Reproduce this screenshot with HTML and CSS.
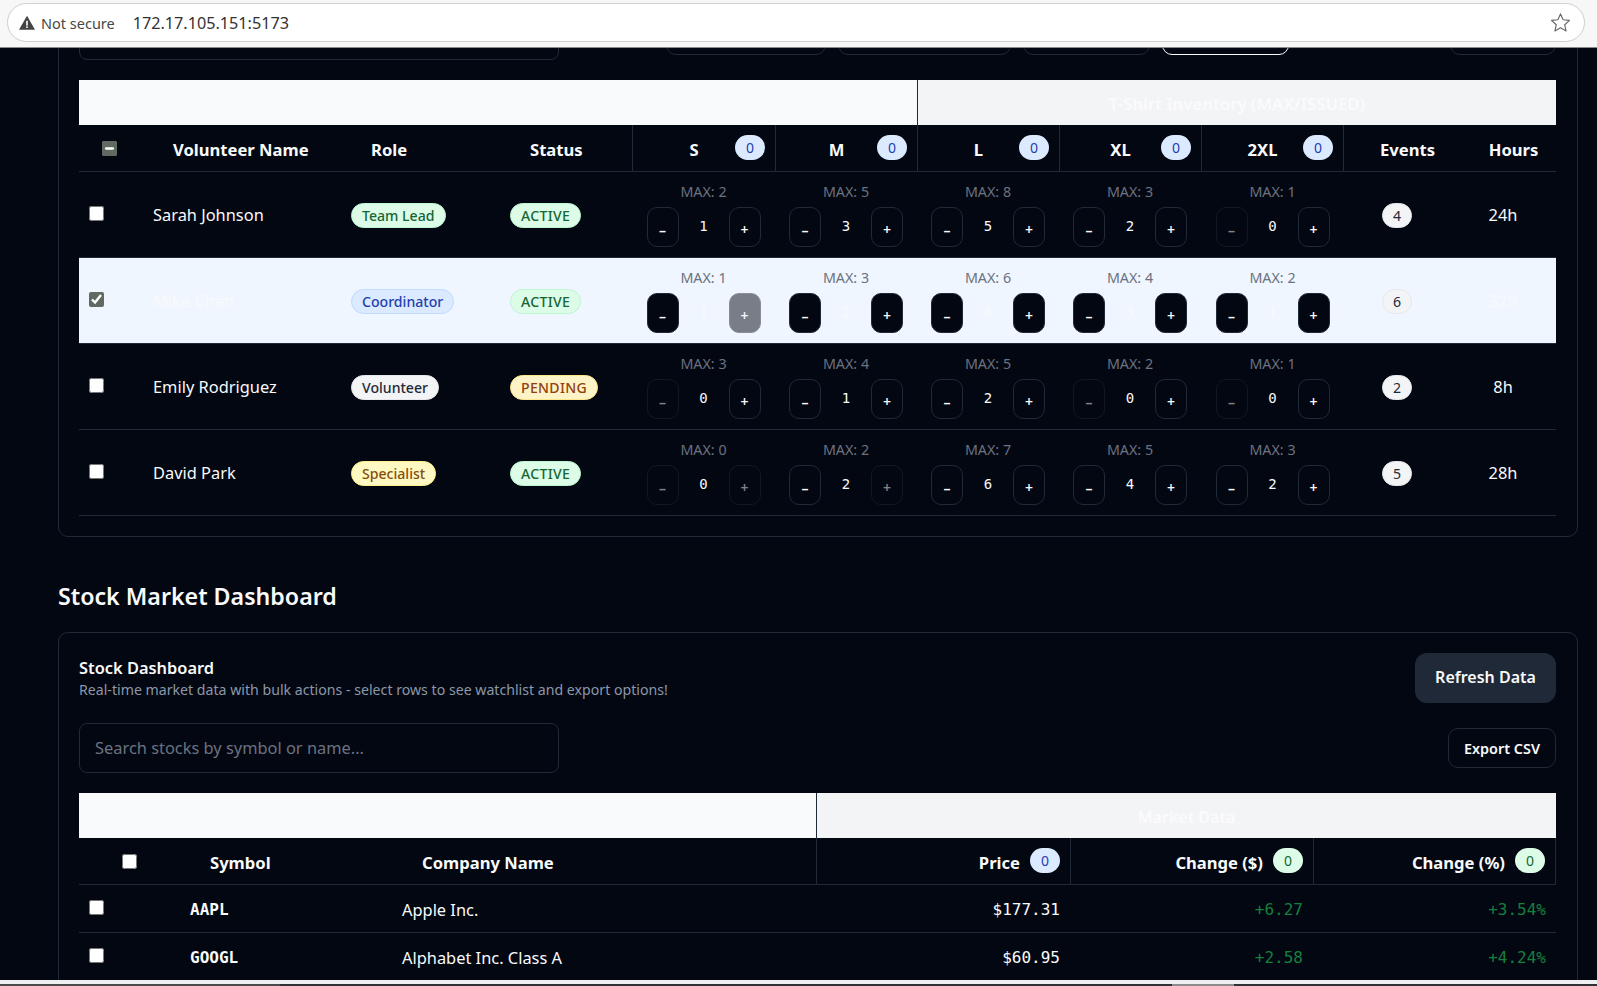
FILE: index.html
```html
<!DOCTYPE html>
<html lang="en">

<head>
    <meta charset="UTF-8">
    <meta name="viewport" content="width=device-width, initial-scale=1.0">
    <title>Volunteer and Stock Tables</title>
    <link rel="stylesheet" href="styles.css">
</head>

<body>
    <header class="browser-bar">
        <div class="address-pill">
            <svg class="warn-icon" viewBox="0 0 16 16" width="16" height="16">
                <path d="M8 .8 16 14.8H0Z" fill="#444"/>
                <rect x="7.2" y="5.8" width="1.6" height="4.8" fill="#fff"/>
                <rect x="7.2" y="11.4" width="1.6" height="1.6" fill="#fff"/>
            </svg>
            <span class="not-secure">Not secure</span>
            <span class="url">172.17.105.151:5173</span>
            <svg class="star-icon" viewBox="0 0 20 20" width="21" height="21">
                <path d="M10 1.8 12.5 7.4 18.6 8 14 12.1 15.3 18.1 10 15 4.7 18.1 6 12.1 1.4 8 7.5 7.4Z" fill="none" stroke="#666" stroke-width="1.1" stroke-linejoin="round"/>
            </svg>
        </div>
    </header>

    <main class="page">
        <section class="card card-scrolled">
            <div class="toolbar">
                <div class="search-box"></div>
                <div class="filter-buttons">
                    <button class="btn-outline filter-a" type="button"></button>
                    <button class="btn-outline filter-b" type="button"></button>
                    <button class="btn-outline filter-c" type="button"></button>
                    <button class="btn-outline filter-c filter-on" type="button"></button>
                </div>
                <button class="btn-outline filter-e" type="button"></button>
            </div>

            <table class="data-table">
                <colgroup>
                    <col class="w-64"><col class="w-198"><col class="w-159"><col class="w-132">
                    <col class="w-143"><col class="w-142"><col class="w-142"><col class="w-142"><col class="w-143">
                    <col class="w-106"><col class="w-106">
                </colgroup>
                <thead>
                    <tr class="group-row">
                        <th colspan="6" class="group-left"></th>
                        <th colspan="5" class="group-right group-long">T-Shirt Inventory (MAX/ISSUED)</th>
                    </tr>
                    <tr class="head-row">
                        <th class="check-head check-tight"><input type="checkbox" id="selectAll"></th>
                        <th class="head-left">Volunteer Name</th>
                        <th class="head-left">Role</th>
                        <th class="head-left">Status</th>
                        <th class="line-left"><div class="size-head"><span>S</span><b class="count blue">0</b></div></th>
                        <th class="line-left"><div class="size-head"><span>M</span><b class="count blue">0</b></div></th>
                        <th class="line-left"><div class="size-head"><span>L</span><b class="count blue">0</b></div></th>
                        <th class="line-left"><div class="size-head"><span>XL</span><b class="count blue">0</b></div></th>
                        <th class="line-left line-right"><div class="size-head"><span>2XL</span><b class="count blue">0</b></div></th>
                        <th class="head-shift">Events</th>
                        <th class="head-shift">Hours</th>
                    </tr>
                </thead>
                <tbody>
                    <tr>
                        <td class="check-cell"><input type="checkbox"></td>
                        <td>Sarah Johnson</td>
                        <td><span class="pill green">Team Lead</span></td>
                        <td><span class="pill green caps">ACTIVE</span></td>
                        <td><div class="max-label">MAX: 2</div><div class="stepper"><button type="button">–</button><span>1</span><button type="button">+</button></div></td>
                        <td><div class="max-label">MAX: 5</div><div class="stepper"><button type="button">–</button><span>3</span><button type="button">+</button></div></td>
                        <td><div class="max-label">MAX: 8</div><div class="stepper"><button type="button">–</button><span>5</span><button type="button">+</button></div></td>
                        <td><div class="max-label">MAX: 3</div><div class="stepper"><button type="button">–</button><span>2</span><button type="button">+</button></div></td>
                        <td><div class="max-label">MAX: 1</div><div class="stepper"><button type="button" disabled>–</button><span>0</span><button type="button">+</button></div></td>
                        <td class="center"><span class="pill round gray">4</span></td>
                        <td class="center">24h</td>
                    </tr>
                    <tr class="selected">
                        <td class="check-cell"><input type="checkbox" checked></td>
                        <td>Mike Chen</td>
                        <td><span class="pill blue">Coordinator</span></td>
                        <td><span class="pill green caps">ACTIVE</span></td>
                        <td><div class="max-label">MAX: 1</div><div class="stepper"><button type="button">–</button><span>1</span><button type="button" disabled>+</button></div></td>
                        <td><div class="max-label">MAX: 3</div><div class="stepper"><button type="button">–</button><span>2</span><button type="button">+</button></div></td>
                        <td><div class="max-label">MAX: 6</div><div class="stepper"><button type="button">–</button><span>4</span><button type="button">+</button></div></td>
                        <td><div class="max-label">MAX: 4</div><div class="stepper"><button type="button">–</button><span>3</span><button type="button">+</button></div></td>
                        <td><div class="max-label">MAX: 2</div><div class="stepper"><button type="button">–</button><span>1</span><button type="button">+</button></div></td>
                        <td class="center"><span class="pill round gray">6</span></td>
                        <td class="center">32h</td>
                    </tr>
                    <tr>
                        <td class="check-cell"><input type="checkbox"></td>
                        <td>Emily Rodriguez</td>
                        <td><span class="pill gray">Volunteer</span></td>
                        <td><span class="pill amber caps">PENDING</span></td>
                        <td><div class="max-label">MAX: 3</div><div class="stepper"><button type="button" disabled>–</button><span>0</span><button type="button">+</button></div></td>
                        <td><div class="max-label">MAX: 4</div><div class="stepper"><button type="button">–</button><span>1</span><button type="button">+</button></div></td>
                        <td><div class="max-label">MAX: 5</div><div class="stepper"><button type="button">–</button><span>2</span><button type="button">+</button></div></td>
                        <td><div class="max-label">MAX: 2</div><div class="stepper"><button type="button" disabled>–</button><span>0</span><button type="button">+</button></div></td>
                        <td><div class="max-label">MAX: 1</div><div class="stepper"><button type="button" disabled>–</button><span>0</span><button type="button">+</button></div></td>
                        <td class="center"><span class="pill round gray">2</span></td>
                        <td class="center">8h</td>
                    </tr>
                    <tr>
                        <td class="check-cell"><input type="checkbox"></td>
                        <td>David Park</td>
                        <td><span class="pill yellow">Specialist</span></td>
                        <td><span class="pill green caps">ACTIVE</span></td>
                        <td><div class="max-label">MAX: 0</div><div class="stepper"><button type="button" disabled>–</button><span>0</span><button type="button" disabled>+</button></div></td>
                        <td><div class="max-label">MAX: 2</div><div class="stepper"><button type="button">–</button><span>2</span><button type="button" disabled>+</button></div></td>
                        <td><div class="max-label">MAX: 7</div><div class="stepper"><button type="button">–</button><span>6</span><button type="button">+</button></div></td>
                        <td><div class="max-label">MAX: 5</div><div class="stepper"><button type="button">–</button><span>4</span><button type="button">+</button></div></td>
                        <td><div class="max-label">MAX: 3</div><div class="stepper"><button type="button">–</button><span>2</span><button type="button">+</button></div></td>
                        <td class="center"><span class="pill round gray">5</span></td>
                        <td class="center">28h</td>
                    </tr>
                </tbody>
            </table>
        </section>

        <h2 class="section-title">Stock Market Dashboard</h2>

        <section class="card">
            <div class="card-head">
                <div>
                    <h3>Stock Dashboard</h3>
                    <p>Real-time market data with bulk actions - select rows to see watchlist and export options!</p>
                </div>
                <button class="btn-solid" type="button">Refresh Data</button>
            </div>

            <div class="toolbar">
                <input class="search-box" type="text" placeholder="Search stocks by symbol or name...">
                <button class="btn-outline" type="button">Export CSV</button>
            </div>

            <table class="data-table">
                <colgroup>
                    <col class="w-101"><col class="w-212"><col class="w-424">
                    <col class="w-254"><col class="w-243"><col class="w-243">
                </colgroup>
                <thead>
                    <tr class="group-row">
                        <th colspan="3" class="group-left"></th>
                        <th colspan="3" class="group-right">Market Data</th>
                    </tr>
                    <tr class="head-row">
                        <th class="check-head"><input type="checkbox"></th>
                        <th class="head-left">Symbol</th>
                        <th class="head-left">Company Name</th>
                        <th class="line-left"><div class="num-head">Price<b class="count blue">0</b></div></th>
                        <th class="line-left"><div class="num-head">Change ($)<b class="count green">0</b></div></th>
                        <th class="line-left line-right"><div class="num-head">Change (%)<b class="count green">0</b></div></th>
                    </tr>
                </thead>
                <tbody class="stock-body">
                    <tr>
                        <td class="check-cell"><input type="checkbox"></td>
                        <td class="symbol">AAPL</td>
                        <td>Apple Inc.</td>
                        <td class="num">$177.31</td>
                        <td class="num up">+6.27</td>
                        <td class="num up">+3.54%</td>
                    </tr>
                    <tr>
                        <td class="check-cell"><input type="checkbox"></td>
                        <td class="symbol">GOOGL</td>
                        <td>Alphabet Inc. Class A</td>
                        <td class="num">$60.95</td>
                        <td class="num up">+2.58</td>
                        <td class="num up">+4.24%</td>
                    </tr>
                </tbody>
            </table>
        </section>
    </main>

    <footer class="window-edge">
        <div class="edge-a"></div>
        <div class="edge-b"></div>
        <div class="edge-c"></div>
        <div class="edge-b edge-fill"></div>
    </footer>

    <script>
        // header checkbox shows the partly selected state
        document.getElementById('selectAll').indeterminate = true;
    </script>
</body>

</html>
```

FILE: styles.css
```css
body {
    font-family: 'Noto Sans', sans-serif;
    font-size: 16.4px;
    margin: 0;
    height: 100vh;
    overflow: hidden;
    display: flex;
    flex-direction: column;
    background-color: #030712;
    color: #f9fafb;
}

/* browser address bar */
.browser-bar {
    flex: none;
    height: 48px;
    box-sizing: border-box;
    padding: 3px 12px 0 7px;
    background-color: #f7f7f7;
    border-bottom: 1px solid #8a8a8a;
    position: relative;
    z-index: 2;
}

.address-pill {
    height: 39px;
    box-sizing: border-box;
    display: flex;
    align-items: center;
    padding-left: 11px;
    background-color: #fff;
    border: 1px solid #cfcfcf;
    border-radius: 20px;
}

.warn-icon {
    flex: none;
}

.not-secure {
    margin-left: 6px;
    font-size: 14.5px;
    color: #474747;
}

.url {
    margin-left: 18px;
    font-size: 16.2px;
    color: #333;
}

.star-icon {
    margin-left: auto;
    margin-right: 13px;
}

/* page */
.page {
    flex: 1;
    min-height: 0;
    overflow: hidden;
    padding: 0 19px 0 58px;
}

.card {
    border: 1px solid #1f2937;
    border-radius: 10px;
    padding: 20px 21px 20px 20px;
}

.card-scrolled {
    margin-top: -59px;
}

.section-title {
    margin: 43px 0 20px;
    font-size: 23.2px;
    line-height: 32px;
    font-weight: 600;
}

.card-head {
    display: flex;
    justify-content: space-between;
    align-items: center;
    margin-bottom: 20px;
}

.card-head h3 {
    margin: 0;
    font-size: 16.4px;
    line-height: 24px;
    font-weight: 600;
}

.card-head p {
    margin: 0;
    font-size: 14.15px;
    line-height: 20px;
    color: #8b98a9;
}

.toolbar {
    display: flex;
    align-items: center;
    justify-content: space-between;
    margin-bottom: 20px;
}

.search-box {
    width: 480px;
    height: 50px;
    box-sizing: border-box;
    padding: 0 15px 2px;
    font-family: inherit;
    font-size: 16.4px;
    color: #f9fafb;
    background-color: transparent;
    border: 1px solid #1f2937;
    border-radius: 8px;
}

.search-box::placeholder {
    color: #6b7280;
}

.filter-buttons {
    display: flex;
    gap: 12px;
    margin-left: 107px;
    margin-right: auto;
}

button {
    font-family: inherit;
}

.btn-outline {
    height: 40px;
    padding: 0 15px;
    font-size: 14.4px;
    font-weight: 600;
    color: #f9fafb;
    background-color: transparent;
    border: 1px solid #1f2937;
    border-radius: 10px;
}

.filter-a { width: 160px; }
.filter-b { width: 173px; }
.filter-c { width: 127px; }
.filter-e { width: 106px; }

.filter-on {
    border-color: #f9fafb;
}

.btn-solid {
    width: 141px;
    height: 50px;
    padding: 0 0 2px;
    font-size: 16px;
    font-weight: 600;
    color: #f9fafb;
    background-color: #1f2937;
    border: none;
    border-radius: 12px;
}

/* tables */
.data-table {
    width: 100%;
    table-layout: fixed;
    border-collapse: separate;
    border-spacing: 0;
}

.w-64 { width: 64px; }
.w-101 { width: 101px; }
.w-106 { width: 106px; }
.w-132 { width: 132px; }
.w-142 { width: 142px; }
.w-143 { width: 143px; }
.w-159 { width: 159px; }
.w-198 { width: 198px; }
.w-212 { width: 212px; }
.w-243 { width: 243px; }
.w-254 { width: 254px; }
.w-424 { width: 424px; }

.data-table th,
.data-table td {
    box-sizing: border-box;
    padding: 0;
}

.group-row th {
    height: 45px;
    padding-top: 2px;
    font-size: 16px;
    font-weight: 600;
    color: #fbfbfc;
    text-align: center;
}

.data-table .group-long {
    font-size: 16.8px;
}

.group-left {
    background-color: #f9fafb;
}

.group-right {
    background-color: #f3f4f6;
    border-left: 1px solid #1f2937;
}

.head-row th {
    height: 47px;
    padding-top: 2px;
    font-size: 16.6px;
    font-weight: 700;
    border-bottom: 1px solid #1f2937;
}

.head-row .head-left {
    text-align: left;
    padding-left: 30px;
}

.head-row .head-shift {
    text-align: center;
    padding-left: 21px;
}

.line-left {
    border-left: 1px solid #1f2937;
}

.line-right {
    border-right: 1px solid #1f2937;
}

.size-head {
    display: flex;
    align-items: center;
    padding: 0 10px 0 30px;
}

.size-head span {
    flex: 1;
    text-align: center;
    padding-right: 10px;
}

.num-head {
    display: flex;
    align-items: center;
    justify-content: flex-end;
    gap: 10px;
    padding-right: 10px;
}

.count {
    flex: none;
    width: 30px;
    height: 25px;
    margin-top: -4px;
    font-size: 14px;
    font-weight: 400;
    line-height: 25px;
    text-align: center;
    border-radius: 13px;
}

.count.blue {
    background-color: #dbeafe;
    color: #1e40af;
}

.count.green {
    background-color: #dcfce7;
    color: #166534;
}

.data-table td {
    padding: 10px;
    vertical-align: middle;
    border-bottom: 1px solid #1f2937;
}

input[type="checkbox"] {
    display: block;
    width: 15px;
    height: 15px;
    margin: 0;
    accent-color: #5f6b60;
}

.check-head input {
    margin: 0 auto 2px;
}

.head-row .check-tight {
    padding-right: 3px;
}

.data-table .check-cell input {
    margin-bottom: 2px;
}

.selected td {
    background-color: #eff6ff;
}

.center {
    text-align: center;
}

.pill {
    display: inline-block;
    box-sizing: border-box;
    height: 25px;
    margin-top: 1px;
    padding: 1px 10px 0;
    font-size: 14.1px;
    font-weight: 500;
    line-height: 22px;
    vertical-align: middle;
    border: 1px solid transparent;
    border-radius: 13px;
}

.pill.caps {
    letter-spacing: 0.3px;
}

.pill.green {
    background-color: #dcfce7;
    border-color: #bbf7d0;
    color: #166534;
}

.pill.blue {
    background-color: #dbeafe;
    border-color: #bfdbfe;
    color: #1e40af;
}

.pill.gray {
    background-color: #f3f4f6;
    border-color: #e5e7eb;
    color: #1f2937;
}

.pill.yellow {
    background-color: #fef9c3;
    border-color: #fef08a;
    color: #854d0e;
}

.pill.amber {
    background-color: #fef3c7;
    border-color: #fde68a;
    color: #92400e;
}

.pill.round {
    width: 30px;
    padding: 1px 0 0;
    font-weight: 400;
    text-align: center;
}

.max-label {
    height: 20px;
    margin-bottom: 5px;
    font-size: 14.3px;
    line-height: 20px;
    color: #6b7280;
    text-align: center;
}

.stepper {
    display: flex;
    align-items: center;
    justify-content: space-between;
    width: 114px;
    margin: 0 auto;
}

.stepper span {
    margin-top: -2px;
    font-family: 'DejaVu Sans Mono', monospace;
    font-size: 14px;
}

.stepper button {
    width: 32px;
    height: 40px;
    padding: 4px 0 0;
    font-size: 14px;
    font-weight: 600;
    color: #f9fafb;
    background-color: #030712;
    border: 1px solid #1f2937;
    border-radius: 10px;
}

.stepper button:disabled {
    opacity: 0.5;
}

.stock-body td {
    height: 48px;
    padding: 2px 10px 0;
}

.stock-body .check-cell {
    padding-top: 0;
}

.symbol {
    font-family: 'DejaVu Sans Mono', monospace;
    font-size: 16px;
    font-weight: 700;
}

.num {
    font-family: 'DejaVu Sans Mono', monospace;
    font-size: 16px;
    text-align: right;
}

.up {
    color: #15803d;
}

/* bottom edge of the window */
.window-edge {
    flex: none;
    height: 6px;
    display: flex;
    align-items: flex-end;
    background-color: #efefef;
    position: relative;
    z-index: 2;
}

.window-edge div {
    height: 2px;
}

.edge-a {
    width: 280px;
    background-color: #4a4a4a;
}

.edge-b {
    width: 892px;
    background-color: #2e3034;
}

.edge-c {
    width: 62px;
    background-color: #8c8c8c;
}

.edge-fill {
    flex: 1;
}
```
